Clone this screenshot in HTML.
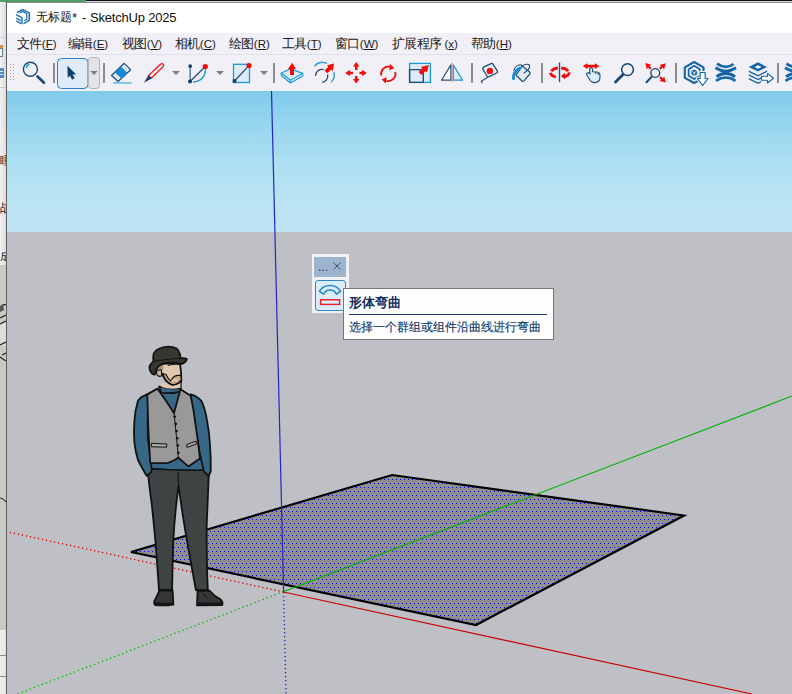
<!DOCTYPE html>
<html><head><meta charset="utf-8">
<style>
*{margin:0;padding:0;box-sizing:border-box}
html,body{width:792px;height:694px;overflow:hidden;background:#fff;font-family:"Liberation Sans",sans-serif;position:relative}
.abs{position:absolute}
#leftstrip{left:0;top:0;width:6px;height:694px;background:linear-gradient(90deg,#f2f2f2,#dcdcdc)}
#topdark{left:86px;top:0;width:706px;height:1px;background:#101018}
#topgreen{left:0;top:0;width:86px;height:2px;background:#4e9e68}
#toplight{left:86px;top:1px;width:706px;height:1px;background:#d4d4d4}
#topgray{left:6px;top:2px;width:786px;height:1px;background:#8a8a8a}
#winborder{left:6px;top:2px;width:1px;height:692px;background:#5e5e5e}
#title{left:7px;top:3px;width:785px;height:30px;background:#fff}
#menubar{left:7px;top:33px;width:785px;height:21px;background:#f0f0f6}
#menuline{left:7px;top:54px;width:785px;height:1px;background:#e1e1e8}
#toolbar{left:7px;top:55px;width:785px;height:36px;background:#f0f0f6}
.menu{position:absolute;top:35.5px;font-size:12.6px;letter-spacing:-0.6px;color:#1a1a1a;white-space:nowrap;line-height:16px}
.lat{font-size:11.5px;letter-spacing:0}
.menu u{text-decoration:underline;text-underline-offset:1px}
.sep{position:absolute;top:63px;width:2px;height:20px;background:#8c8c8c}
.ico{position:absolute;top:55px;width:36px;height:36px}
#viewport{left:7px;top:91px;width:785px;height:603px;overflow:hidden}
</style></head><body>
<div class="abs" id="leftstrip"></div>
<div class="abs" style="left:0;top:37px;width:6px;height:1px;background:#cfcfcf"></div>
<div class="abs" style="left:0;top:45px;width:3px;height:3px;background:#d38a3a;border-radius:1px"></div>
<div class="abs" style="left:0;top:48px;width:3px;height:9px;background:#f4f4f4;border:1px solid #6a7a90;border-left:none"></div>
<div class="abs" style="left:0;top:68px;width:4px;height:10px;background:#4d88d0"></div>
<div class="abs" style="left:0;top:71px;width:3px;height:1px;background:#e8f0fa"></div>
<div class="abs" style="left:0;top:74px;width:3px;height:1px;background:#e8f0fa"></div>
<div class="abs" style="left:0;top:87px;width:6px;height:1px;background:#c8c8c8"></div>
<div class="abs" style="left:0;top:154px;font-size:12px;line-height:12px;color:#222;width:6px;overflow:hidden;direction:rtl"><span style="margin-right:-6px">瞳</span></div>
<div class="abs" style="left:0;top:202px;font-size:12px;line-height:12px;color:#222;width:6px;overflow:hidden;direction:rtl"><span style="margin-right:-6px">战</span></div>
<div class="abs" style="left:0;top:250px;font-size:12px;line-height:12px;color:#222;width:6px;overflow:hidden;direction:rtl"><span style="margin-right:-6px">成</span></div>
<div class="abs" style="left:0;top:265px;width:6px;height:365px;background:#c9c9c7"></div>
<div class="abs" style="left:0;top:322px;width:6px;height:24px;background:#dedede"></div>
<svg class="abs" style="left:0;top:295px" width="6" height="70" viewBox="0 295 6 70"><path d="M0 310 Q2 303 6 305 M0 318 L6 315 M0 324 L6 321 M0 345 L6 342 M2 355 L6 353 M0 357 L6 361" fill="none" stroke="#222" stroke-width="1.2"/><path d="M0 306 L3 304 L4 310 L0 312Z" fill="#555"/><path d="M0 500 Q3 498 6 502" fill="none" stroke="#222" stroke-width="1.2"/></svg>
<svg class="abs" style="left:0;top:490px" width="6" height="20" viewBox="0 490 6 20"><path d="M0 498 Q3 498 6 502" fill="none" stroke="#222" stroke-width="1.2"/></svg>
<div class="abs" style="left:0;top:630px;width:6px;height:64px;background:linear-gradient(90deg,#f0f0f0,#e4e4e4)"></div>
<div class="abs" style="left:0;top:655px;width:6px;height:1px;background:#8e8e8e"></div>
<div class="abs" style="left:0;top:676px;width:6px;height:1px;background:#8e8e8e"></div>
<div class="abs" id="topgreen"></div>
<div class="abs" id="topdark"></div>
<div class="abs" id="toplight"></div>
<div class="abs" id="topgray"></div>
<div class="abs" id="title"></div>
<div class="abs" id="menubar"></div>
<div class="abs" id="menuline"></div>
<div class="abs" id="toolbar"></div>
<div class="abs" id="winborder"></div>

<!-- title -->
<svg class="abs" style="left:10px;top:6px" width="24" height="22" viewBox="10 6 24 22">
<g fill="none" stroke="#1f6fb4" stroke-linejoin="miter">
<path d="M16.8 12.6 L22.7 9.5 L29.3 12.9 L29.3 20.3 L23.6 23.6" stroke-width="1.5"/>
<path d="M19.6 13 L22.6 11.5 L26.8 13.6 L26.8 19.4 L24.3 20.8" stroke-width="1.3"/>
<path d="M16 14.6 L22 17.6 L22 24.3" stroke-width="1.4"/>
<path d="M16.2 18.2 L20.8 20.6 M16.2 20.9 L21.2 23.6" stroke-width="1.3"/>
</g>
</svg>
<div class="abs" style="left:36px;top:9px;font-size:12px;color:#111;white-space:nowrap;line-height:17px">无标题</div>
<div class="abs" style="left:72px;top:9px;font-size:13px;color:#111;white-space:nowrap;line-height:17px">*</div>
<div class="abs" style="left:82px;top:9px;font-size:13px;color:#111;white-space:nowrap;line-height:17px">-</div>
<div class="abs" style="left:90px;top:9px;font-size:13px;letter-spacing:-0.2px;color:#111;white-space:nowrap;line-height:17px">SketchUp 2025</div>

<!-- menu -->
<div class="menu" style="left:17px">文件<span class="lat">(<u>F</u>)</span></div>
<div class="menu" style="left:68px">编辑<span class="lat">(<u>E</u>)</span></div>
<div class="menu" style="left:122px">视图<span class="lat">(<u>V</u>)</span></div>
<div class="menu" style="left:175px">相机<span class="lat">(<u>C</u>)</span></div>
<div class="menu" style="left:229px">绘图<span class="lat">(<u>R</u>)</span></div>
<div class="menu" style="left:282px">工具<span class="lat">(<u>T</u>)</span></div>
<div class="menu" style="left:335px">窗口<span class="lat">(<u>W</u>)</span></div>
<div class="menu" style="left:392px">扩展程序 <span class="lat">(<u>x</u>)</span></div>
<div class="menu" style="left:471px">帮助<span class="lat">(<u>H</u>)</span></div>

<!-- toolbar -->
<svg class="abs" style="left:0;top:55px" width="792" height="36" viewBox="0 55 792 36">
<g fill="#a6a6a6">
<rect x="10" y="64" width="1" height="1"/><rect x="13" y="64" width="1" height="1"/>
<rect x="10" y="67" width="1" height="1"/><rect x="13" y="67" width="1" height="1"/>
<rect x="10" y="70" width="1" height="1"/><rect x="13" y="70" width="1" height="1"/>
<rect x="10" y="73" width="1" height="1"/><rect x="13" y="73" width="1" height="1"/>
<rect x="10" y="76" width="1" height="1"/><rect x="13" y="76" width="1" height="1"/>
<rect x="10" y="79" width="1" height="1"/><rect x="13" y="79" width="1" height="1"/>
</g>
<!-- magnifier -->
<circle cx="30.4" cy="69.3" r="7" fill="none" stroke="#164878" stroke-width="1.4"/>
<path d="M26 68 A4.5 4.5 0 0 1 29.5 64.5" fill="none" stroke="#1a9ad8" stroke-width="1.3"/>
<path d="M37.5 76.5 L44 82.8" stroke="#164878" stroke-width="2.6" stroke-linecap="round"/>
<!-- separators -->
<g fill="#8c8c8c">
<rect x="53" y="63" width="2" height="20"/><rect x="103" y="63" width="2" height="20"/>
<rect x="273" y="63" width="2" height="20"/><rect x="471" y="63" width="2" height="20"/>
<rect x="541" y="63" width="2" height="20"/><rect x="675" y="63" width="2" height="20"/>
<rect x="777" y="63" width="2" height="20"/>
</g>
<!-- select -->
<rect x="57.5" y="58.5" width="30.5" height="30" rx="4" fill="#deebf8" stroke="#2b7fc4" stroke-width="1"/>
<rect x="88.5" y="57.5" width="11" height="31" rx="3" fill="#e4e4e6" stroke="#b4b4b8" stroke-width="1"/>
<path d="M90.2 71 L97.8 71 L94 75 Z" fill="#7f7f80"/>
<path d="M67.8 66.5 L75.4 74 L72.2 74.3 L74.2 78.2 L72.1 79.2 L70.2 75.2 L68.1 77.3 Z" fill="#0f3d6c" stroke="#0f3d6c" stroke-width="0.7" stroke-linejoin="round"/>
<!-- eraser -->
<path d="M124.2 63.3 L130.6 69.7 L118.1 81.5 L111.5 75.5 Z" fill="#dbe9f6" stroke="#1f4d78" stroke-width="1.2" stroke-linejoin="round"/>
<path d="M121 66.6 L127.4 73 L121.4 78.6 L115 72.4 Z" fill="#1888cf"/>
<rect x="113" y="82" width="18.5" height="1.8" fill="#72c2ea"/>
<!-- pencil -->
<path d="M148.6 75.5 L160.5 64.2 Q162 63 163.2 64.3 Q164.3 65.5 163 66.8 L151.2 78.2 Z" fill="#fff" stroke="#f01818" stroke-width="1.3" stroke-linejoin="round"/>
<path d="M148.4 75.2 L151.5 78.4 L144 82.8 Z" fill="#173b63"/>
<path d="M172 71 L180 71 L176 75 Z M216 71 L224 71 L220 75 Z M260 71 L268 71 L264 75 Z" fill="#7f7f80"/>
<!-- arc -->
<path d="M190.2 66 L190.1 81.5" stroke="#4a6a8a" stroke-width="1.3"/>
<path d="M190 81.5 L205.3 66.5" stroke="#1f4d78" stroke-width="1.2"/>
<path d="M193 82 Q205 81 205.5 69" fill="none" stroke="#1a9ad8" stroke-width="1.4"/>
<circle cx="190.2" cy="66.1" r="1.9" fill="#0f3d6c"/>
<circle cx="190" cy="81.5" r="2" fill="#0f3d6c"/>
<circle cx="205.3" cy="66.5" r="2.6" fill="#f50a0a"/>
<!-- rect -->
<rect x="233.5" y="64.3" width="16" height="18.2" fill="#dcebf7" stroke="#1a9ad8" stroke-width="1.3"/>
<path d="M234.5 81 L249 65.5" stroke="#1f4d78" stroke-width="1.1"/>
<circle cx="249" cy="65.5" r="2.6" fill="#f50a0a"/>
<circle cx="234.5" cy="81" r="2" fill="#0f3d6c"/>
<!-- push pull -->
<path d="M281.3 73 L290.5 68.9 L302.7 73.4 L290.5 80.2 Z" fill="#ddecf8" stroke="#1a9ad8" stroke-width="1.2" stroke-linejoin="round"/>
<path d="M281.3 73 L281.3 75.5 L290.5 83 L302.7 76 L302.7 73.4 M290.5 80.2 L290.5 83" fill="none" stroke="#1a9ad8" stroke-width="1.2" stroke-linejoin="round"/>
<path d="M290 75 L290 69 L288 69 L292.2 62.8 L296 69 L294 69 L294 75 Z" fill="#f50a0a"/>
<!-- follow me -->
<path d="M314.5 66 A10 10 0 0 1 327 63.5 M333.8 72 A10 10 0 0 1 331 82.3" fill="none" stroke="#1a9ad8" stroke-width="1.3"/>
<path d="M315.6 75.8 A6.2 6.2 0 0 1 323.5 69.6 M327.6 74.5 A6.2 6.2 0 0 1 322 82.3" fill="none" stroke="#1f4d78" stroke-width="1.3"/>
<path d="M334 63.6 L332.8 70.9 L331.2 69.4 L327.4 73.3 L324.5 70.5 L328.4 66.7 L327 65.3 Z" fill="#f50a0a"/>
<!-- move -->
<path d="M356.2 62 L359.5 66.5 L357.5 66.5 L357.5 70 L355 70 L355 66.5 L353 66.5 Z M356.2 83.5 L359.5 79 L357.5 79 L357.5 76 L355 76 L355 79 L353 79 Z M345.3 73 L349.8 69.8 L349.8 71.8 L353 71.8 L353 74.2 L349.8 74.2 L349.8 76.2 Z M366.7 73 L362.2 69.8 L362.2 71.8 L359.5 71.8 L359.5 74.2 L362.2 74.2 L362.2 76.2 Z" fill="#f50a0a"/>
<!-- rotate -->
<path d="M381.3 75.5 A7.2 7.2 0 0 1 389.8 66.8 M395.2 72 A7.2 7.2 0 0 1 386.5 80.8" fill="none" stroke="#f50a0a" stroke-width="1.8"/>
<path d="M394.3 68.3 L390 63.8 L389.2 70.2 Z M381.6 79.5 L386.8 77.2 L385.8 83.5 Z" fill="#f50a0a"/>
<!-- scale -->
<rect x="409.6" y="63.4" width="20.8" height="19" fill="#dcebf7" stroke="#1a9ad8" stroke-width="1.3"/>
<path d="M409.6 69.6 L423.3 69.6 L423.3 82.4 L409.6 82.4 Z" fill="none" stroke="#1f4d78" stroke-width="1.4"/>
<path d="M428.8 64.9 L427 72.5 L425.4 71.1 L421.5 74.9 L418.5 72.1 L422.4 68.3 L420.9 66.9 Z" fill="#f50a0a"/>
<!-- flip -->
<path d="M441.6 80.2 L450.9 64.9 L450.9 80.2 Z" fill="#fff" stroke="#1f4d78" stroke-width="1.2" stroke-linejoin="round"/>
<path d="M453.3 64.9 L462.6 80.2 L453.3 80.2 Z" fill="#dcebf7" stroke="#1a9ad8" stroke-width="1.2" stroke-linejoin="round"/>
<path d="M452.1 63 L452.1 82" stroke="#f07070" stroke-width="1.3" stroke-dasharray="1.6 0.8"/>
<!-- tape -->
<path d="M484.5 66.7 L491 63.6 Q492.3 63 493 64.2 L497.4 71.2 Q498 72.3 496.8 73 L489 76.6 Q487.8 77.2 487 76 L483 69.6 Q482.3 67.8 484.5 66.7 Z" fill="#e0f0fa" stroke="#1f4d78" stroke-width="1.3" stroke-linejoin="round"/>
<circle cx="489.9" cy="70.9" r="3.2" fill="#f50a0a"/>
<path d="M487.8 77.3 L481.3 81.2 L482.2 83.3" fill="none" stroke="#1f4d78" stroke-width="1.1"/>
<!-- paint -->
<path d="M521.7 65.5 L529.6 72 Q530.6 73 529.8 74 L524 80.8 Q523 81.8 522 81 L516.5 75.8 Q515.7 75 516.4 74.2 Z" fill="#dcebf7" stroke="#1f4d78" stroke-width="1.2" stroke-linejoin="round"/>
<path d="M513.8 71 Q514.5 66.5 519 65 Q522 64.3 521.7 66 Q521 69 516.4 74.2" fill="#fff" stroke="#1f4d78" stroke-width="1.1"/>
<path d="M522.5 65.8 Q526 63.5 529 64.6 Q530.5 66.5 528.5 69.5 L523.8 73.3" fill="none" stroke="#1f4d78" stroke-width="1.1"/>
<path d="M513.5 78.5 Q513 72 519.8 68" fill="none" stroke="#1888cf" stroke-width="3" stroke-linecap="round"/>
<!-- orbit -->
<path d="M551.5 71.2 A8.6 4.4 0 0 1 568 71.2" fill="none" stroke="#f50a0a" stroke-width="3"/>
<path d="M550.5 72.8 Q551 76 555.8 77" fill="none" stroke="#f50a0a" stroke-width="2.8"/>
<path d="M569.3 72.3 Q569 75.5 564 76.8" fill="none" stroke="#f50a0a" stroke-width="2.8"/>
<path d="M560.8 76.3 L564.8 72.8 L565.3 79.6 Z" fill="#f50a0a"/>
<path d="M559.5 63 L559.5 81.5" stroke="#f0f0f6" stroke-width="3.4"/>
<path d="M559.5 63 L559.5 81.5" stroke="#27527c" stroke-width="1.4" stroke-linecap="round"/>
<!-- pan -->
<path d="M590 74 L589.7 69 Q591 66.3 592.6 69 L592.6 71.8 L597.2 72 Q599.8 72.6 600 75 L599.8 79.2 Q598.5 82.6 594.3 82.6 Q591.8 82.5 590.2 80.5 L586.6 74.5 Q586.5 72.4 588.5 72.8 Z" fill="#dcebf7" stroke="#1f4d78" stroke-width="1.1" stroke-linejoin="round"/>
<path d="M595.5 72 L595.8 74 M598 72.5 L598.2 75" stroke="#1f4d78" stroke-width="1"/>
<path d="M582.8 66.1 L587.3 63.2 L587.3 64.7 L594.9 64.7 L594.9 63.2 L599.4 66.1 L594.9 69 L594.9 67.5 L587.3 67.5 L587.3 69 Z" fill="#f50a0a"/>
<!-- zoom -->
<circle cx="627.5" cy="69.6" r="5.9" fill="none" stroke="#164878" stroke-width="1.5"/>
<path d="M623 74.5 L615.5 82" stroke="#164878" stroke-width="2.8" stroke-linecap="round"/>
<!-- zoom extents -->
<circle cx="655.3" cy="73" r="4.4" fill="none" stroke="#164878" stroke-width="1.4"/>
<path d="M651.8 76.6 L646.5 82.2" stroke="#164878" stroke-width="2" stroke-linecap="round"/>
<path d="M645.3 63 L651.5 64.8 L649.5 66 L651.6 68 L650 69.6 L648 67.5 L646.8 69.5 Z M665.8 63.3 L664 69.5 L662.8 67.5 L660.6 69.6 L659 68 L661.2 66 L659.5 64.9 Z M665.8 82.6 L659.5 81 L661.3 79.8 L659.2 77.8 L660.8 76.2 L663 78.3 L664.2 76.4 Z" fill="#f50a0a"/>
<!-- 3d warehouse -->
<path d="M694.2 62 L703.5 67.3 L703.5 77.8 L694.2 83 L684.8 77.8 L684.8 67.3 Z" fill="none" stroke="#1565a8" stroke-width="2.1" stroke-linejoin="round"/>
<path d="M694.2 65.8 L699.8 69.2 L699.8 75.8 L694.2 79.1 L688.6 75.8 L688.6 69.2 Z" fill="none" stroke="#1565a8" stroke-width="1.7" stroke-linejoin="round"/>
<path d="M691.3 71 L694.2 69.4 L697.1 71 L697.1 74.2 L694.2 75.9 L691.3 74.2 Z" fill="#1565a8"/>
<path d="M692 71.5 L694.2 72.7 L696.4 71.5 M694.2 72.7 L694.2 75.3" stroke="#fff" stroke-width="0.8" fill="none"/>
<path d="M700.2 72.5 L705.2 72.5 L705.2 78.5 L708 78.5 L702.7 85.5 L697.3 78.5 L700.2 78.5 Z" fill="#fff" stroke="#f0f0f6" stroke-width="3" stroke-linejoin="round"/>
<path d="M700.2 72.5 L705.2 72.5 L705.2 78.5 L708 78.5 L702.7 85.5 L697.3 78.5 L700.2 78.5 Z" fill="#fff" stroke="#1565a8" stroke-width="1.2" stroke-linejoin="round"/>
<!-- ext warehouse X -->
<g id="xico" fill="none" stroke="#1565a8">
<path d="M717 63.6 Q725.7 70 733.5 64" stroke-width="2.6"/>
<path d="M715.5 67.8 Q725.7 74.5 736 67.8" stroke-width="3"/>
<path d="M716.5 76.8 Q725.7 70 735 76.8" stroke-width="3"/>
<path d="M716 80.8 Q725.7 74.3 735.5 80.8" stroke-width="2.6"/>
</g>
<!-- layers send -->
<path d="M748.8 67 L758 62.3 L767 67 L758 71.5 Z" fill="#1565a8"/>
<path d="M754.5 67 L758 65.2 L761.5 67 L758 68.8 Z" fill="#fff"/>
<path d="M748.8 70.5 L758 75 L767 70.5 L767 72 L758 76.5 L748.8 72 Z M748.8 74.2 L758 78.7 L762 76.7 L762 78.3 L758 80.3 L748.8 75.8 Z M748.8 78 L758 82.5 L761 81 L761 82.6 L758 84 L748.8 79.5 Z" fill="#1565a8"/>
<path d="M761.5 76.3 L767.5 76.3 L767.5 73.5 L773.5 78.3 L767.5 83 L767.5 80.3 L761.5 80.3 Z" fill="#fff" stroke="#1565a8" stroke-width="1.1" stroke-linejoin="round"/>
<!-- partial X -->
<use href="#xico" x="69.5" y="0"/>
</svg>

<!-- viewport -->
<div class="abs" id="viewport">
<svg width="785" height="603" viewBox="7 91 785 603" style="display:block">
<defs>
<linearGradient id="sky" x1="0" y1="0" x2="0" y2="1">
<stop offset="0" stop-color="#80cbea"/><stop offset="0.22" stop-color="#95d5ef"/><stop offset="0.5" stop-color="#acdff2"/><stop offset="0.76" stop-color="#bae3f3"/><stop offset="1" stop-color="#bfe4f4"/>
</linearGradient>
<pattern id="dots" patternUnits="userSpaceOnUse" x="0" y="0" width="4" height="8">
<rect width="4" height="8" fill="#8f8f8f"/>
<rect x="0" y="7" width="1" height="1" fill="#0000ff"/>
<rect x="2" y="3" width="1" height="1" fill="#0000ff"/>
</pattern>
</defs>
<rect x="7" y="91" width="785" height="141" fill="url(#sky)"/>
<rect x="7" y="232" width="785" height="462" fill="#bfc0c5"/>
<!-- axes dotted -->
<line x1="283.5" y1="592" x2="7" y2="531.7" stroke="#c80000" stroke-width="1.3" stroke-dasharray="1.3 2.8"/>
<line x1="283.8" y1="591.5" x2="15" y2="694.9" stroke="#00b000" stroke-width="1.3" stroke-dasharray="1.3 3"/>
<line x1="283.6" y1="592" x2="286" y2="694" stroke="#2020c8" stroke-width="1.3" stroke-dasharray="1.3 2.7"/>
<!-- plane -->
<polygon points="131,552 392,475 684,515.5 476,625" fill="url(#dots)" stroke="#000" stroke-width="2.2" stroke-linejoin="miter"/>
<!-- axes solid -->
<line x1="283.5" y1="592" x2="752" y2="694" stroke="#c80000" stroke-width="1.15"/>
<line x1="283.8" y1="591.5" x2="792" y2="396" stroke="#00b000" stroke-width="1.15"/>
<line x1="271.5" y1="91" x2="283.6" y2="591.5" stroke="#2626c4" stroke-width="1.2"/>
<!-- figure -->
<g id="figure" stroke="#121212" stroke-width="1.8" stroke-linejoin="round" stroke-linecap="round">
<!-- pants -->
<path d="M147.5 468.6 Q149.5 488 151.6 503 Q154 525 155.9 546.4 L159 590 L172.1 590 Q172.5 565 173.2 542 Q175 510 178.6 486 Q182 512 187.2 542 L195.9 590 L207.8 590 Q206.5 560 206.7 524.8 Q208 495 209 469.7 Z" fill="#3d4443"/>
<path d="M178.6 486 L178 472" fill="none" stroke-width="1"/>
<!-- shoes -->
<path d="M159.5 590.5 L172.6 590.5 L173.4 604.5 Q164 606 155 605 Q153 602 155.5 599 Z" fill="#363636"/>
<path d="M154.8 602 Q164 603.5 173.2 602.2 L173.4 604.8 Q164 606 155 605.2 Z" fill="#161616" stroke="none"/>
<path d="M197.6 590.8 L209.4 590.5 Q214 596 220 599 Q223.5 602 222.3 605 L197 605.3 Z" fill="#363636"/>
<path d="M197 602.5 L222.8 602.5 L222.3 605 L197 605.3 Z" fill="#161616" stroke="none"/>
<path d="M204 594.5 L207 598" fill="none" stroke-width="1"/>
<!-- sweater body -->
<path d="M150 394 L190 394 L203.5 470 L150.9 468.6 Z" fill="#386888" stroke="none"/>
<path d="M150.9 468.6 Q177 471 203.5 470" fill="none" stroke-width="1.5"/>
<!-- left arm -->
<path d="M147.3 394.4 Q140 397 138 400.9 Q135 410 134.4 421 Q133.5 432 134.4 442.6 Q135.5 452 138 460 Q142 468 146.6 475.8 L150.5 473 Q151.5 471 151.7 470 Q150 455 147.8 438 Q147.5 420 148 400 Z" fill="#386888"/>
<!-- right arm -->
<path d="M190.6 394.4 Q197 396 201.4 400.9 Q205 408 207.1 421 Q209.5 433 210 445.5 Q211 458 210.7 471.5 L208.6 475.8 L204.5 472 Q203.5 471 203.5 470 Q200 455 197 438.3 Q194 420 190.6 396 Z" fill="#386888"/>
<!-- turtleneck -->
<path d="M159 386.5 Q170 389.5 180.7 388 L180.5 392 Q170 394 161.2 392.6 Z" fill="#386888"/>
<!-- vest -->
<path d="M157.4 388.6 L147.3 394.4 Q148 430 150.2 462.8 Q160 463.5 168.2 462.8 Q174 461 178.3 457.8 L188.4 466.4 L199.9 458.5 Q198 440 195.6 425.3 Q193.5 408 190.6 395.8 L180.5 389.3 Q177 402 174 413.1 Q166 400 157.4 388.6 Z" fill="#999999"/>
<path d="M151.7 443.4 L166.8 444 L166.6 447.2 L151.8 446.8 Z M187 444.5 L196 441.2 L196.5 444 L187.5 447.3 Z" fill="#a9a9a9" stroke-width="1"/>
<path d="M174 413.1 Q176.5 435 178.3 457.8" fill="none" stroke-width="1"/>
<g fill="#111" stroke="none"><circle cx="174.7" cy="416.7" r="1.3"/><circle cx="175.8" cy="423.9" r="1.3"/><circle cx="176.5" cy="431" r="1.3"/><circle cx="177.2" cy="438.3" r="1.3"/><circle cx="177.9" cy="445.5" r="1.3"/><circle cx="178.3" cy="452.7" r="1.3"/></g>
<!-- neck -->
<path d="M161.2 383.5 L161.5 387 Q170 390 180.8 387.8 L181.3 381 Z" fill="#e2c8ae" stroke="none"/>
<path d="M181.3 380 L181 387.8" fill="none" stroke-width="1.2"/>
<!-- face -->
<path d="M158.5 366 Q162 363.5 166 363.4 L180 364 Q181.5 372 181.3 381 Q178 384.5 172.2 384.8 Q166 383 163.2 376 Q160 371 158.5 366 Z" fill="#e2c8ae"/>
<path d="M162.8 373.5 Q165 382 172.2 384.8 Q179 384.5 181.3 379.5 L180.8 375.5 Q177 374.8 174.5 376.3 Q172 378 171 381.2 Q168 379 166 374.5 Z" fill="#c8a686" stroke-width="1.2"/>
<path d="M171.6 381 Q174.5 379.2 177.5 380.3" fill="none" stroke="#efdcc6" stroke-width="1.1"/>
<path d="M158.4 365.5 L163.6 365.2 L163 370 L158.4 370.5 Z" fill="#a09a8a" stroke="none"/>
<path d="M157 370.5 Q155.8 373 157.5 375.5 Q159.5 377 161.8 375.8 L161.3 369.8 Z" fill="#cdb89c" stroke-width="1.1"/>
<path d="M168.2 365.4 Q171 364.3 174 364.5" fill="none" stroke-width="1"/>
<!-- hat -->
<path d="M153.4 361.2 Q153 356 153.7 353.6 Q155 350.5 158.4 349 Q163 346.6 168.2 346.6 Q173 346.8 176.4 348.4 Q179 350.5 179.8 353.6 L180.7 358.3 Q184 358 186.8 358.8 Q186.5 361 185 362.3 Q183 363.6 181 364 Q176 362.6 171.1 362.3 Q167 362.6 163.6 363.5 Q160.5 364.5 158.4 366.4 Q156.5 368.5 156 371 L154.9 374.5 Q152.5 374.5 152 373.6 Q149.5 371 149.4 367.6 Q149.6 365 151.4 363.5 Z" fill="#373631"/>
<path d="M153.5 361.2 Q158 360.3 162.4 360 Q168 359.3 174 358.8 L180.7 358.3" fill="none" stroke-width="1.1"/>
</g>
</svg>
</div>

<!-- floating toolbar -->
<div class="abs" style="left:312px;top:254px;width:37px;height:59px;background:#f0f0f6"></div>
<div class="abs" style="left:314px;top:257px;width:32px;height:20px;background:#9db4cf"></div>
<div class="abs" style="left:318px;top:262px;font-size:12px;color:#333;line-height:10px">...</div>
<svg class="abs" style="left:332px;top:261px" width="10" height="10" viewBox="0 0 10 10"><path d="M1.5 1.5 L8.5 8.5 M8.5 1.5 L1.5 8.5" stroke="#2f4666" stroke-width="0.9"/></svg>
<div class="abs" style="left:315px;top:280px;width:31px;height:31px;background:#dcecf8;border:1px solid #2f88c8;border-radius:3px"></div>
<svg class="abs" style="left:315px;top:280px" width="31" height="31" viewBox="0 0 31 31">
<path d="M4.4 11.3 A12.6 12.6 0 0 1 25.6 11.3 L21.4 14.2 A7 7 0 0 0 8.6 14.2 Z" fill="#dcecf8" stroke="#1f86c8" stroke-width="1.5" stroke-linejoin="round"/>
<rect x="5.6" y="19.8" width="19" height="4.6" fill="#d8f4fa" stroke="#e82030" stroke-width="1.5"/>
</svg>

<!-- tooltip -->
<div class="abs" style="left:343px;top:288px;width:211px;height:52px;background:#fdfdfd;border:1px solid #777"></div>
<div class="abs" style="left:349px;top:295px;font-size:12.5px;font-weight:bold;color:#142f5c;line-height:16px;white-space:nowrap">形体弯曲</div>
<div class="abs" style="left:349px;top:314px;width:198px;height:1px;background:#1f3d66"></div>
<div class="abs" style="left:349px;top:319px;font-size:12px;-webkit-text-stroke:0.15px #12396a;color:#12396a;line-height:16px;white-space:nowrap">选择一个群组或组件沿曲线进行弯曲</div>
</body></html>
